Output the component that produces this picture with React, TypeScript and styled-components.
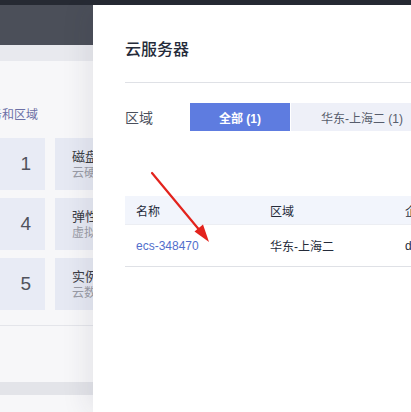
import React from "react";
import styled, { createGlobalStyle } from "styled-components";

const GlobalStyle = createGlobalStyle`
  html, body {
    margin: 0;
    padding: 0;
    background: #f7f7f9;
  }
  body {
    font-family: "Liberation Sans", "Noto Sans CJK SC", sans-serif;
  }
`;

const Frame = styled.div`
  position: relative;
  width: 411px;
  height: 412px;
  overflow: hidden;
  background: #f7f7f9;
`;

const TopStrip = styled.div`
  height: 5px;
  background: #262a33;
`;

const ConsoleHeader = styled.div`
  height: 40px;
  background: #4b4f59;
`;

const Breadcrumb = styled.div`
  height: 16px;
  background: #e8e9ee;
`;

const Content = styled.div`
  display: flex;
  flex-direction: column;
  padding-top: 46px;
`;

const SectionLink = styled.div`
  margin-left: -22px;
  font-size: 12px;
  line-height: 16px;
  color: #6c70a6;
  white-space: nowrap;
`;

const CardGrid = styled.div`
  display: grid;
  grid-template-columns: 45px 200px;
  column-gap: 10px;
  row-gap: 8px;
  margin-top: 15px;
`;

const NumberCard = styled.div`
  height: 52px;
  display: flex;
  align-items: center;
  justify-content: flex-end;
  padding-right: 14px;
  background: #e8ebf5;
  font-size: 19px;
  color: #50525c;
`;

const InfoCard = styled.div`
  height: 52px;
  display: flex;
  flex-direction: column;
  justify-content: center;
  padding-left: 17px;
  background: #e6e9f3;
  white-space: nowrap;
`;

const InfoTitle = styled.div`
  font-size: 13px;
  line-height: 17px;
  color: #3a3c44;
`;

const InfoSub = styled.div`
  font-size: 12px;
  line-height: 16px;
  color: #9a9ca6;
`;

const Rule = styled.div`
  margin-top: 15px;
  height: 1px;
  background: #e4e5ea;
`;

const Footer = styled.div`
  margin-top: 56px;
  height: 13px;
  background: #e3e4e9;
`;

const Drawer = styled.aside`
  position: absolute;
  top: 5px;
  right: 0;
  bottom: 0;
  width: 318px;
  background: #ffffff;
  box-shadow: -8px 0 24px rgba(40, 44, 60, 0.08);
  padding-left: 32px;
  box-sizing: border-box;
  overflow: hidden;
`;

const DrawerTitle = styled.h2`
  margin: 0;
  padding-top: 33px;
  font-size: 16px;
  line-height: 24px;
  font-weight: 500;
  color: #252b3a;
  white-space: nowrap;
`;

const Divider = styled.div`
  margin-top: 20px;
  height: 1px;
  width: 400px;
  background: #dfe1e6;
`;

const FilterRow = styled.div`
  display: flex;
  align-items: center;
  margin-top: 20px;
  height: 28px;
`;

const FilterLabel = styled.span`
  width: 65px;
  flex-shrink: 0;
  font-size: 14px;
  color: #4a4f5c;
`;

const Tabs = styled.div`
  display: flex;
  gap: 1px;
`;

const Tab = styled.button<{ $active?: boolean }>`
  height: 28px;
  padding: 0 ${(p) => (p.$active ? "29px" : "30px")};
  border: none;
  flex-shrink: 0;
  white-space: nowrap;
  font-family: inherit;
  font-size: 12px;
  font-weight: ${(p) => (p.$active ? 700 : 400)};
  color: ${(p) => (p.$active ? "#ffffff" : "#575d6c")};
  background: ${(p) => (p.$active ? "#5e7ce0" : "#eef0f8")};
`;

const Table = styled.div`
  margin-top: 65px;
  width: 420px;
  font-size: 12px;
`;

const Row = styled.div<{ $head?: boolean }>`
  display: grid;
  grid-template-columns: 134px 135px 150px;
  align-items: center;
  height: ${(p) => (p.$head ? "28px" : "41px")};
  background: ${(p) => (p.$head ? "#f2f5fc" : "#ffffff")};
  border-bottom: 1px solid ${(p) => (p.$head ? "#eceef3" : "#dfe1e6")};
  color: #252b3a;
`;

const Cell = styled.div`
  padding-left: 11px;
  white-space: nowrap;
  overflow: hidden;
`;

const Link = styled.span`
  color: #526ecc;
`;

const Annotation = styled.svg`
  position: absolute;
  left: 0;
  top: 0;
  pointer-events: none;
`;

const cards = [
  { count: 1, title: "磁盘", sub: "云硬盘" },
  { count: 4, title: "弹性公网IP", sub: "虚拟私有云" },
  { count: 5, title: "实例", sub: "云数据库" },
];

export default function App() {
  return (
    <Frame>
      <GlobalStyle />
      <TopStrip />
      <ConsoleHeader />
      <Breadcrumb />
      <Content>
        <SectionLink>服务和区域</SectionLink>
        <CardGrid>
          {cards.map((c) => (
            <React.Fragment key={c.title}>
              <NumberCard>{c.count}</NumberCard>
              <InfoCard>
                <InfoTitle>{c.title}</InfoTitle>
                <InfoSub>{c.sub}</InfoSub>
              </InfoCard>
            </React.Fragment>
          ))}
        </CardGrid>
        <Rule />
        <Footer />
      </Content>

      <Drawer>
        <DrawerTitle>云服务器</DrawerTitle>
        <Divider />
        <FilterRow>
          <FilterLabel>区域</FilterLabel>
          <Tabs>
            <Tab $active>全部 (1)</Tab>
            <Tab>华东-上海二 (1)</Tab>
          </Tabs>
        </FilterRow>
        <Table>
          <Row $head>
            <Cell>名称</Cell>
            <Cell>区域</Cell>
            <Cell>企业项目</Cell>
          </Row>
          <Row>
            <Cell>
              <Link>ecs-348470</Link>
            </Cell>
            <Cell>华东-上海二</Cell>
            <Cell>default</Cell>
          </Row>
        </Table>
      </Drawer>

      <Annotation width="411" height="412" viewBox="0 0 411 412">
        <line x1="152" y1="173" x2="201" y2="232" stroke="#e3231d" strokeWidth="2.2" strokeLinecap="round" />
        <polygon points="209,242 194.5,231.5 203,224.5" fill="#e3231d" />
      </Annotation>
    </Frame>
  );
}
